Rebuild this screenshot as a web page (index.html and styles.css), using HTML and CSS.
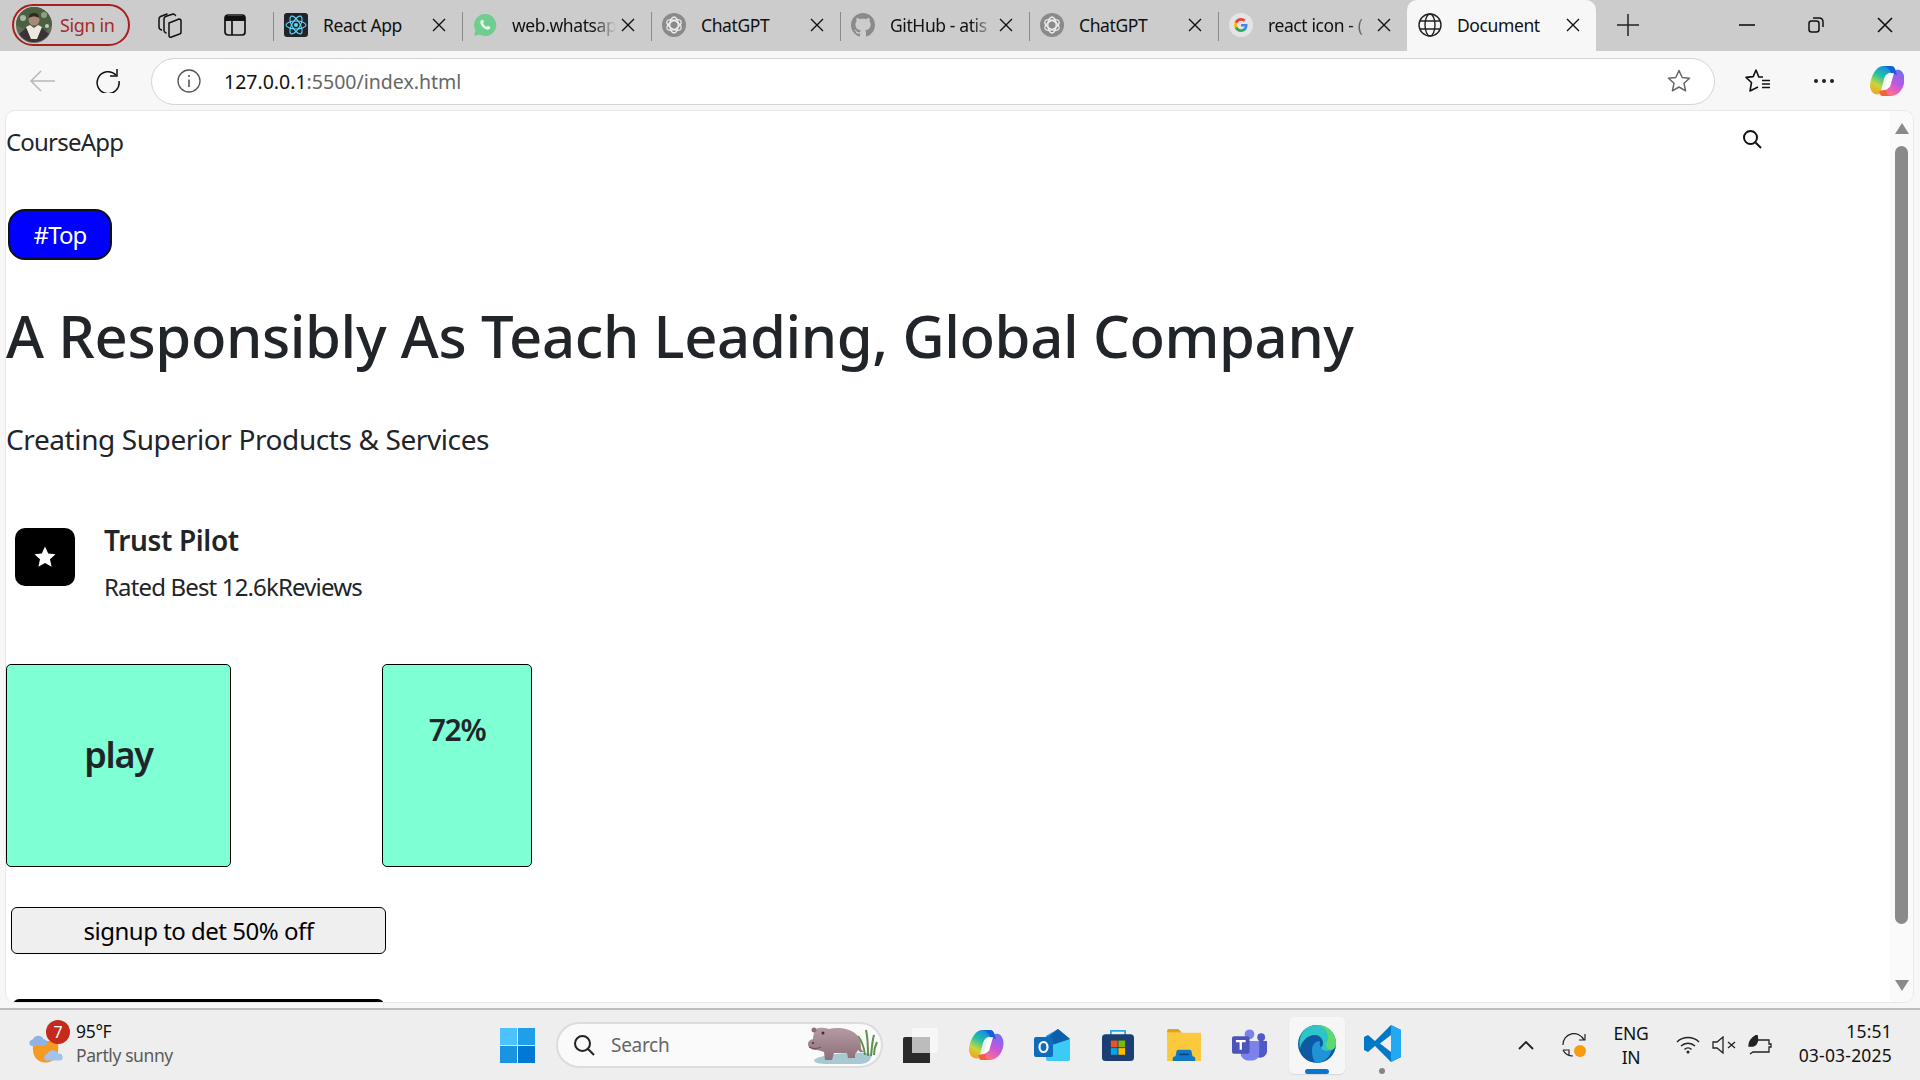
FILE: index.html
```html
<!DOCTYPE html>
<html lang="en">
<head>
    <meta charset="UTF-8">
    <meta name="viewport" content="width=device-width, initial-scale=1.0">
    <title>Document</title>
    <link rel="stylesheet" href="styles.css">
</head>
<body>
    <svg class="defs" width="0" height="0">
        <defs>
            <symbol id="close" viewBox="0 0 14 14"><path d="M1 1l12 12M13 1L1 13" fill="none" stroke="#111" stroke-width="1.4"/></symbol>
            <symbol id="gpt" viewBox="0 0 24 24">
                <circle cx="12" cy="12" r="12" fill="#8a8a8a"/>
                <g fill="none" stroke="#eee" stroke-width="1.3">
                    <ellipse cx="12" cy="12" rx="4.2" ry="8"/>
                    <ellipse cx="12" cy="12" rx="4.2" ry="8" transform="rotate(60 12 12)"/>
                    <ellipse cx="12" cy="12" rx="4.2" ry="8" transform="rotate(120 12 12)"/>
                </g>
            </symbol>
            <linearGradient id="copA" x1="0.7" y1="0" x2="0.2" y2="1">
                <stop offset="0" stop-color="#1b7fe8"/><stop offset=".4" stop-color="#22c3a6"/><stop offset=".7" stop-color="#c9d63a"/><stop offset="1" stop-color="#f9a11b"/>
            </linearGradient>
            <linearGradient id="copB" x1="0.8" y1="0" x2="0.2" y2="1">
                <stop offset="0" stop-color="#6f6ef0"/><stop offset=".45" stop-color="#c257e0"/><stop offset=".8" stop-color="#f9699a"/><stop offset="1" stop-color="#fb8a4a"/>
            </linearGradient>
            <linearGradient id="hippoBody" x1="0" y1="0" x2="0" y2="1">
                <stop offset="0" stop-color="#b59aa4"/><stop offset="1" stop-color="#8d6f78"/>
            </linearGradient>
            <symbol id="copilot" viewBox="0 0 34 32">
                <path d="M13 1h8c2 0 3 1 4 3l1 3-7 1c-3 1-4 3-5 6l-3 12c-1 3-3 4-6 3-3-1-5-5-5-9C1 11 6 1 13 1z" fill="url(#copA)"/>
                <path d="M21 31h-8c-2 0-3-1-4-3l-.5-2 7-1c3-1 4-3 5-6l3-11c1-3 3-4 6-3 3 1 5 5 5 9 0 9-6 17-14 17z" fill="url(#copB)"/>
                <path d="M14 1h7c2 0 3 1 4 3l2 6-6-2c-1-3-3-6-7-7z" fill="#1560d4"/>
                <path d="M19 9l5-1-4 14-5 2z" fill="#fff" fill-opacity=".92"/>
                <path d="M10 26l7-1c-1 3 0 5 4 6h-8c-2 0-3-2-3-5z" fill="#f4603c"/>
            </symbol>
        </defs>
    </svg>

    <div class="tabstrip">
        <div class="signin">
            <svg class="avatar" viewBox="0 0 36 36">
                <circle cx="18" cy="18" r="18" fill="#5f6d55"/>
                <path d="M0 18A18 18 0 0 1 36 18L30 24 8 22z" fill="#4a6040"/>
                <circle cx="7" cy="11" r="3" fill="#a9b7a0"/><circle cx="28" cy="8" r="3" fill="#8f9f85"/><circle cx="31" cy="19" r="2" fill="#c3cabb"/>
                <path d="M3 27a18 18 0 0 0 30 0l-7-6H10z" fill="#3d3138"/>
                <circle cx="18" cy="13" r="5.500" fill="#a98a78"/>
                <path d="M13 11c0-4 2-5 5-5s5 1 5 5c-3-2-7-2-10 0z" fill="#2f2a28"/>
                <path d="M10 20l4-2 4 3 4-3 4 2-5 12h-6z" fill="#ece8de"/>
            </svg>
            <span>Sign in</span>
        </div>
        <svg class="strip-icon first" viewBox="0 0 26 26" fill="none" stroke="#111" stroke-width="1.5" stroke-linecap="round">
            <path d="M12 11l10-4c1 0 2 0 2 2v11c0 1-.5 2-1.500 2l-8 3c-1.500.5-2.500 0-2.500-1.500z"/>
            <path d="M9 21c-1-.5-2-1-2-2.500V7c0-1 .5-2 1.500-2.500L16 2c1 0 2 .5 2.500 1.500"/>
            <path d="M4.500 18C3 17.500 2 17 2 15V7c0-1 .5-2 1.500-2.500L10 2"/>
        </svg>
        <svg class="strip-icon" viewBox="0 0 24 24" fill="none" stroke="#111" stroke-width="1.7">
            <rect x="2" y="2" width="20" height="20" rx="3"/>
            <path d="M2 5.500h20" stroke-width="5"/><path d="M9 7v15"/>
        </svg>

        <div class="tab">
            <svg class="fav" viewBox="0 0 24 24">
                <rect width="24" height="24" rx="3" fill="#20232a"/>
                <g fill="none" stroke="#61dafb" stroke-width="1.1">
                    <ellipse cx="12" cy="12" rx="10" ry="4"/>
                    <ellipse cx="12" cy="12" rx="10" ry="4" transform="rotate(60 12 12)"/>
                    <ellipse cx="12" cy="12" rx="10" ry="4" transform="rotate(120 12 12)"/>
                </g>
                <circle cx="12" cy="12" r="2" fill="#61dafb"/>
            </svg>
            <span class="tab-title">React App</span>
            <svg class="tab-x"><use href="#close"/></svg>
        </div>
        <div class="tab">
            <svg class="fav" viewBox="0 0 24 24">
                <path d="M12 1a11 11 0 0 0-9.500 16.500L1 23l5.700-1.500A11 11 0 1 0 12 1z" fill="#6fce8f"/>
                <path d="M8.500 7c-1 .6-1.500 2-1 3.500 1 2.800 3.200 5 6 6 1.500.5 2.900 0 3.500-1l.3-1.500-2.600-1.300-1.100 1.200c-1.500-.6-3-2.100-3.600-3.600l1-1.100L10 6.800z" fill="#eaf7ee"/>
            </svg>
            <span class="tab-title fade">web.whatsap</span>
            <svg class="tab-x"><use href="#close"/></svg>
        </div>
        <div class="tab">
            <svg class="fav"><use href="#gpt"/></svg>
            <span class="tab-title">ChatGPT</span>
            <svg class="tab-x"><use href="#close"/></svg>
        </div>
        <div class="tab">
            <svg class="fav" viewBox="0 0 16 16"><path fill="#8a8a8a" d="M8 0C3.580 0 0 3.580 0 8c0 3.540 2.290 6.530 5.470 7.590.4.070.55-.17.55-.38 0-.19-.01-.82-.01-1.490-2.010.37-2.530-.49-2.690-.94-.09-.23-.48-.94-.82-1.130-.28-.15-.68-.52-.01-.53.63-.01 1.080.58 1.230.82.72 1.210 1.870.87 2.330.66.070-.52.28-.87.51-1.070-1.780-.2-3.640-.89-3.640-3.950 0-.87.31-1.590.82-2.150-.08-.2-.36-1.020.08-2.120 0 0 .67-.21 2.200.82.64-.18 1.320-.27 2-.27.68 0 1.360.09 2 .27 1.530-1.040 2.200-.82 2.200-.82.44 1.100.16 1.920.08 2.120.51.56.82 1.270.82 2.150 0 3.070-1.870 3.750-3.650 3.950.29.25.54.73.54 1.480 0 1.070-.01 1.930-.01 2.200 0 .21.15.46.55.38A8.013 8.013 0 0 0 16 8c0-4.420-3.580-8-8-8z"/></svg>
            <span class="tab-title fade">GitHub - atis</span>
            <svg class="tab-x"><use href="#close"/></svg>
        </div>
        <div class="tab">
            <svg class="fav"><use href="#gpt"/></svg>
            <span class="tab-title">ChatGPT</span>
            <svg class="tab-x"><use href="#close"/></svg>
        </div>
        <div class="tab">
            <svg class="fav" viewBox="0 0 24 24">
                <circle cx="12" cy="12" r="12" fill="#e4e4e4"/>
                <path d="M18.500 12.200c0-.5 0-.9-.1-1.300H12v2.500h3.700c-.2.900-.7 1.600-1.400 2.100v1.700h2.200c1.300-1.200 2-3 2-5z" fill="#4285f4"/>
                <path d="M12 19c1.900 0 3.400-.6 4.500-1.700l-2.200-1.700c-.6.400-1.400.7-2.300.7-1.800 0-3.300-1.200-3.800-2.800H5.900v1.800C7 17.500 9.300 19 12 19z" fill="#34a853"/>
                <path d="M8.200 13.500c-.3-.9-.3-1.900 0-2.900V8.800H5.900c-1 1.900-1 4.500 0 6.500z" fill="#fbbc05"/>
                <path d="M12 7.800c1 0 1.900.3 2.600 1l2-2C15.400 5.700 13.800 5 12 5 9.300 5 7 6.500 5.900 8.800l2.300 1.800C8.700 9 10.200 7.800 12 7.800z" fill="#ea4335"/>
            </svg>
            <span class="tab-title fade">react icon - (</span>
            <svg class="tab-x"><use href="#close"/></svg>
        </div>
        <div class="tab active">
            <svg class="fav" viewBox="0 0 24 24" fill="none" stroke="#222" stroke-width="1.400">
                <circle cx="12" cy="12" r="11"/><ellipse cx="12" cy="12" rx="5" ry="11"/>
                <path d="M2 8h20M2 16h20"/>
            </svg>
            <span class="tab-title">Document</span>
            <svg class="tab-x"><use href="#close"/></svg>
        </div>
        <svg class="new-tab" viewBox="0 0 22 22"><path d="M11 0v22M0 11h22" stroke="#222" stroke-width="1.500"/></svg>

        <div class="window-btns">
            <svg viewBox="0 0 16 16"><path d="M0 8h16" stroke="#111" stroke-width="1.600"/></svg>
            <svg viewBox="0 0 16 16" fill="none" stroke="#111" stroke-width="1.500"><rect x="1" y="4" width="10" height="11" rx="2.500"/><path d="M5 1h6c2.500 0 4 1.500 4 4v5"/></svg>
            <svg viewBox="0 0 16 16"><path d="M1 1l14 14M15 1L1 15" stroke="#111" stroke-width="1.600"/></svg>
        </div>
    </div>

    <div class="toolbar">
        <svg class="tool back" viewBox="0 0 26 24" fill="none" stroke="#b8b8b8" stroke-width="1.500"><path d="M26 12H2M12 2L2 12l10 10"/></svg>
        <svg class="tool reload" viewBox="0 0 24 24" fill="none" stroke="#111" stroke-width="1.500"><path d="M20 6a11 11 0 1 0 3 6"/><path d="M21 0v7h-7"/></svg>
        <div class="addressbar">
            <svg class="info" viewBox="0 0 24 24" fill="none" stroke="#555" stroke-width="1.300"><circle cx="12" cy="12" r="11"/><path d="M12 10.500V18M12 6v2" stroke-width="1.600"/></svg>
            <span class="url">127.0.0.1<span class="url-rest">:5500/index.html</span></span>
            <svg class="addr-star" viewBox="0 0 24 24" fill="none" stroke="#666" stroke-width="1.500" stroke-linejoin="round"><path d="M12 1.500l3.200 7 7.300.8-5.500 5 1.600 7.500L12 18l-6.600 3.800L7 14.300l-5.500-5 7.300-.8z"/></svg>
        </div>
        <svg class="tool fav-list" viewBox="0 0 26 26" fill="none" stroke="#111" stroke-width="1.600" stroke-linejoin="round"><path d="M18 9h-4.200L11 2 8.200 8.600 1 9.400l5.500 5.100L5 23l8-4"/><path d="M17 12.500h8M17 16h8M17 19.500h8"/></svg>
        <svg class="tool dots" viewBox="0 0 22 6" fill="#222"><circle cx="3" cy="3" r="2"/><circle cx="11" cy="3" r="2"/><circle cx="19" cy="3" r="2"/></svg>
        <svg class="tool copilot-top"><use href="#copilot"/></svg>
    </div>

    <div class="viewport">
        <main class="page">
            <nav class="navbar">
                <span class="brand">CourseApp</span>
                <svg class="nav-search" viewBox="0 0 20 20" fill="none" stroke="#111" stroke-width="2"><circle cx="8.500" cy="8.500" r="6.500"/><path d="M13.500 13.500L19 19"/></svg>
            </nav>
            <button class="top-btn">#Top</button>
            <h1 class="headline">A Responsibly As Teach Leading, Global Company</h1>
            <p class="subhead">Creating Superior Products &amp; Services</p>
            <div class="trust">
                <div class="trust-icon">
                    <svg viewBox="0 0 24 24" fill="#fff"><path d="M12 1.500l3.200 7 7.300.8-5.500 5 1.600 7.500L12 18l-6.600 3.800L7 14.300l-5.500-5 7.300-.8z"/></svg>
                </div>
                <div>
                    <h4 class="trust-title">Trust Pilot</h4>
                    <p class="trust-text">Rated Best 12.6kReviews</p>
                </div>
            </div>
            <div class="cards">
                <div class="card card-play">play</div>
                <div class="card card-percent">72%</div>
            </div>
            <button class="signup">signup to det 50% off</button>
            <div class="dark-btn"></div>
        </main>
        <div class="scrollbar">
            <span class="arrow-up"></span>
            <span class="thumb"></span>
            <span class="arrow-down"></span>
        </div>
    </div>

    <footer class="taskbar">
        <div class="weather">
            <div class="weather-icon">
                <svg viewBox="0 0 38 36">
                    <path d="M4 14h26v8c0 8-5 14-13 14S4 30 4 22z" fill="#f59a23"/>
                    <path d="M1 18a4 4 0 0 1 3-6 6 6 0 0 1 11 0 3.500 3.500 0 0 1 0 7H3z" fill="#8fb3e8"/>
                    <path d="M16 33a4 4 0 0 1 3-6 6 6 0 0 1 11 0 3.500 3.500 0 0 1 2 7H18z" fill="#a5c2ee"/>
                </svg>
                <span class="weather-badge">7</span>
            </div>
            <div class="weather-text">
                <span>95°F</span>
                <span class="muted">Partly sunny</span>
            </div>
        </div>
        <div class="task-center">
            <svg class="win-logo" viewBox="0 0 35 35">
                <rect width="17" height="17" fill="#4cc2ff"/><rect x="18" width="17" height="17" fill="#1e9fe8"/>
                <rect y="18" width="17" height="17" fill="#1a94e0"/><rect x="18" y="18" width="17" height="17" fill="#0078d4"/>
            </svg>
            <div class="searchbox">
                <svg viewBox="0 0 22 22" fill="none" stroke="#222" stroke-width="2"><circle cx="9.500" cy="9.500" r="7.500"/><path d="M15 15l6 6"/></svg>
                <span>Search</span>
                <svg class="hippo" viewBox="0 0 72 40">
                    <path d="M8 35c6-7 50-9 58-6-1 8-6 10-14 10H22C14 39 8 38 8 35z" fill="#a8c8d2"/>
                    <path d="M59 30c-1-9-4-15-7-19M62 31c0-10 0-18-2-26M65 31c1-8 1-14 3-21M68 30c0-5 1-9 3-13" stroke="#5f8f4f" stroke-width="2" fill="none"/>
                    <path d="M10 4c4-2 9-1 13 0 8-2 20-1 27 5 4 4 5 9 5 14 0 2 2 3 3 4l-4 0-2-2c-1 2-2 3-3 4v4h-7l-1-5H28l-2 7h-7l-1-8c-3-1-5-2-7-2-5 0-9-2-9-6 0-3 2-4 5-5 0-3 1-7 3-10z" fill="url(#hippoBody)"/>
                    <circle cx="8" cy="5" r="2.500" fill="#8d6f78"/>
                    <circle cx="17" cy="8" r="1.500" fill="#333"/>
                    <ellipse cx="7" cy="18" rx="1.200" ry="1" fill="#4d3a40"/>
                    <path d="M3 22c4 2 8 2 12 0" stroke="#6d5059" fill="none"/>
                </svg>
            </div>
            <svg class="app task-view" viewBox="0 0 35 35">
                <path d="M0 11a2 2 0 0 1 2-2h23a2 2 0 0 1 2 2v24H0z" fill="#2a2a2a"/>
                <rect x="9" width="26" height="25" rx="1" fill="#f7f7f7" fill-opacity=".9"/>
                <rect x="9" y="9" width="18" height="16" fill="#bcbcbc"/>
            </svg>
            <svg class="app"><use href="#copilot"/></svg>
            <svg class="app" viewBox="0 0 36 32">
                <path d="M12 7L24 0l12 10v19a3 3 0 0 1-3 3H15a3 3 0 0 1-3-3z" fill="#1490df"/>
                <path d="M24 0l12 10-12 8-12-8z" fill="#0c5ea8"/>
                <path d="M12 18l24-8v19a3 3 0 0 1-3 3H15a3 3 0 0 1-3-3z" fill="#3ccbf4"/>
                <rect y="8" width="19" height="20" rx="2" fill="#0f6cbd"/>
                <ellipse cx="9.500" cy="18" rx="4" ry="5" fill="none" stroke="#fff" stroke-width="2.200"/>
            </svg>
            <svg class="app" viewBox="0 0 36 36">
                <path d="M10 8V2h16v6" fill="none" stroke="#2aa7e8" stroke-width="2"/>
                <rect y="6" width="36" height="30" rx="4" fill="#1b3f72"/>
                <rect x="10" y="13" width="7.500" height="7.500" fill="#f25022"/><rect x="18.500" y="13" width="7.500" height="7.500" fill="#7fba00"/>
                <rect x="10" y="21.500" width="7.500" height="7.500" fill="#00a4ef"/><rect x="18.500" y="21.500" width="7.500" height="7.500" fill="#ffb900"/>
            </svg>
            <svg class="app" viewBox="0 0 36 34">
                <path d="M0 2a2 2 0 0 1 2-2h10l4 4h-16z" fill="#e3a40f"/>
                <rect y="4" width="36" height="30" fill="#fcc93c"/>
                <path d="M6 32a3 3 0 0 1 3-3l1-5a2 2 0 0 1 2-2h12a2 2 0 0 1 2 2l1 5a3 3 0 0 1 3 3v2H6z" fill="#0f78c9"/>
                <path d="M13 27h10" stroke="#0a3e70" stroke-width="1.500"/>
            </svg>
            <svg class="app" viewBox="0 0 37 32">
                <circle cx="18" cy="5" r="5" fill="#7b83eb"/><circle cx="30" cy="8" r="4" fill="#5059c9"/>
                <path d="M24 12h12v10c0 4-3 7-7 7-2 0-4-1-5-2z" fill="#5059c9"/>
                <path d="M9 12h19v13a7 7 0 0 1-7 7h-4c-4 0-8-3-8-7z" fill="#7b83eb"/>
                <rect y="7" width="18" height="18" rx="2" fill="#4b53bc"/>
                <path d="M4 12h10M9 12v9" stroke="#fff" stroke-width="2.400"/>
            </svg>
            <div class="edge-slot">
                <svg viewBox="0 0 38 38">
                    <circle cx="19" cy="19" r="19" fill="#0c59a4"/>
                    <path d="M2 24C-1 9 8 0 19 0c11 0 19 8 19 18 0 5-4 8-9 8-4 0-7-1-7-3 2-1 3-3 3-5 0-5-4-8-8-8-8 0-14 7-15 14z" fill="#2fc4c8"/>
                    <path d="M38 18C38 8 30 0 19 0c7 2 11 6 11 12 0 3-1 5-2 6 0 5 3 8 6 7 3-2 4-4 4-7z" fill="#5dd96d"/>
                    <path d="M14 25c0-5 3-9 8-9-1 5 1 9 6 10 2 0 4 0 6-1-3 8-9 13-15 13-3 0-5-6-5-13z" fill="#2292d6"/>
                </svg>
                <span class="edge-line"></span>
            </div>
            <div class="code-slot">
                <svg viewBox="0 0 37 37">
                    <path d="M27 0l10 5v27l-10 5L11 21 4 27l-4-2v-13l4-2 7 6z" fill="#0078c8"/>
                    <path d="M27 10L16 18.500 27 27z" fill="#f0f0f0"/>
                    <path d="M27 0l10 5v27l-10 5z" fill="#23a9f2"/>
                </svg>
                <span class="code-dot"></span>
            </div>
        </div>
        <div class="tray">
            <svg class="tray-chevron" viewBox="0 0 16 9" fill="none" stroke="#222" stroke-width="1.800"><path d="M1 8l7-7 7 7"/></svg>
            <svg class="tray-sync" viewBox="0 0 24 24" fill="none" stroke="#222" stroke-width="1.200">
                <path d="M1 12A11 11 0 0 1 22 7M23 1v6h-6M1 17h6v6M1 17a11 11 0 0 0 10 6"/>
                <circle cx="18" cy="18" r="6" fill="#f99b0c" stroke="none"/>
            </svg>
            <div class="tray-lang"><span>ENG</span><span>IN</span></div>
            <svg class="tray-wifi" viewBox="0 0 24 18" fill="none" stroke="#222" stroke-width="1.500"><path d="M1 6a16 16 0 0 1 22 0M5 10a10 10 0 0 1 14 0M8.500 13.500a5 5 0 0 1 7 0"/><circle cx="12" cy="16" r="1.500" fill="#222" stroke="none"/></svg>
            <svg class="tray-sound" viewBox="0 0 24 18" fill="none" stroke="#222" stroke-width="1.300"><path d="M1 6h4l6-5v16l-6-5H1zM16 6l7 6M23 6l-7 6"/></svg>
            <svg class="tray-battery" viewBox="0 0 24 20" fill="none" stroke="#222" stroke-width="1.300"><path d="M9 5h12v4h2v3h-2v5H5l-3 2"/><path d="M1 11C1 5 5 2 9 0c1 4 1 10-4 11z" fill="#222"/></svg>
            <div class="clock"><span>15:51</span><span>03-03-2025</span></div>
        </div>
    </footer>
</body>
</html>
```

FILE: styles.css
```css
:root {
    --strip-bg: #cccccc;
    --toolbar-bg: #f7f7f7;
    --task-bg: #eeeeee;
    --text-dark: #212529;
    --card-bg: #7fffd4;
}

* {
    box-sizing: border-box;
}

html, body {
    height: 100%;
}

body {
    margin: 0;
    display: flex;
    flex-direction: column;
    overflow: hidden;
    font-family: "Noto Sans", "Open Sans", sans-serif;
    background: var(--toolbar-bg);
    color: #111;
}

svg {
    display: block;
    flex: none;
}

.defs {
    position: absolute;
}

/* browser tabs */
.tabstrip {
    height: 51px;
    flex: none;
    display: flex;
    align-items: center;
    background: var(--strip-bg);
    padding-left: 12px;
}

.signin {
    width: 118px;
    height: 42px;
    margin-top: -1px;
    display: flex;
    align-items: center;
    gap: 8px;
    padding-left: 2px;
    border: 2px solid #a91e1e;
    border-radius: 21px;
    color: #a52a2a;
    font-size: 18px;
    letter-spacing: -0.4px;
}

.avatar {
    width: 36px;
    height: 36px;
}

.strip-icon {
    width: 24px;
    height: 24px;
    margin-left: 40px;
    margin-top: -1px;
}

.strip-icon.first {
    width: 26px;
    height: 26px;
    margin-left: 27px;
}

.strip-icon + .tab {
    margin-left: 26px;
}

.tab {
    position: relative;
    width: 189px;
    height: 51px;
    flex: none;
    display: flex;
    align-items: center;
    padding: 0 16px 2px 11px;
    font-size: 17.5px;
    letter-spacing: -0.4px;
}

.tab::before {
    content: "";
    position: absolute;
    left: 0;
    top: 12px;
    height: 29px;
    width: 1px;
    background: #8a8a8a;
}

.tab.active {
    background: var(--toolbar-bg);
    border-radius: 10px 10px 0 0;
}

.tab.active::before {
    display: none;
}

.fav {
    width: 24px;
    height: 24px;
}

.tab-title {
    flex: 1;
    margin: 0 5px 0 15px;
    white-space: nowrap;
    overflow: hidden;
}

.tab-title.fade {
    -webkit-mask-image: linear-gradient(to right, #000 78%, transparent 100%);
    mask-image: linear-gradient(to right, #000 78%, transparent 100%);
}

.tab-x {
    width: 14px;
    height: 14px;
}

.new-tab {
    width: 22px;
    height: 22px;
    margin-left: 21px;
    margin-top: -1px;
}

.window-btns {
    display: flex;
    margin-left: auto;
    margin-top: -1px;
    margin-right: 27px;
    gap: 53px;
}

.window-btns svg {
    width: 16px;
    height: 16px;
}

/* address bar row */
.toolbar {
    height: 59px;
    flex: none;
    display: flex;
    align-items: center;
    padding: 0 16px 0 29px;
}

.tool.back {
    width: 26px;
    height: 24px;
}

.tool.reload {
    width: 24px;
    height: 24px;
    margin-left: 41px;
}

.addressbar {
    width: 1565px;
    height: 47px;
    margin-left: 31px;
    margin-top: 1px;
    display: flex;
    align-items: center;
    padding: 0 23px 0 25px;
    background: #fff;
    border: 1.5px solid #d4d4d4;
    border-radius: 24px;
}

.info {
    width: 24px;
    height: 24px;
}

.url {
    margin-left: 23px;
    font-size: 19.5px;
    color: #111;
}

.url-rest {
    color: #666;
}

.addr-star {
    width: 24px;
    height: 24px;
    margin-left: auto;
}

.tool.fav-list {
    width: 26px;
    height: 26px;
    margin-left: 30px;
}

.tool.dots {
    width: 22px;
    height: 6px;
    margin-left: 42px;
}

.tool.copilot-top {
    width: 34px;
    height: 32px;
    margin-left: 35px;
}

/* page area */
.viewport {
    height: 893px;
    flex: none;
    display: flex;
    margin: 0 6px 0 5px;
    background: #fff;
    border: 1px solid #e8e8e8;
    border-radius: 10px;
    overflow: hidden;
}

.page {
    flex: 1;
    min-width: 0;
    overflow: hidden;
    color: var(--text-dark);
}

.navbar {
    height: 52px;
    padding-top: 8px;
    display: flex;
    align-items: center;
    justify-content: space-between;
    padding-right: 128px;
}

.brand {
    font-size: 24px;
    letter-spacing: -0.8px;
}

.nav-search {
    width: 20px;
    height: 20px;
    margin-top: -4px;
}

.top-btn {
    display: block;
    width: 104px;
    height: 51px;
    margin: 46px 0 0 2px;
    padding: 0;
    background: #0000ff;
    color: #fff;
    border: 2.5px solid #111;
    border-radius: 17px;
    font-family: inherit;
    font-size: 24px;
    letter-spacing: -0.9px;
}

.headline {
    margin: 41px 0 0;
    font-size: 58px;
    font-weight: 500;
    line-height: 1.2;
    letter-spacing: -0.38px;
    white-space: nowrap;
}

.subhead {
    margin: 52px 0 0;
    font-size: 28px;
    line-height: 1.2;
    letter-spacing: -0.4px;
}

.trust {
    display: flex;
    margin: 72px 0 0 9px;
    gap: 29px;
}

.trust-icon {
    width: 60px;
    height: 58px;
    display: flex;
    align-items: center;
    justify-content: center;
    background: #000;
    border-radius: 10px;
}

.trust-icon svg {
    width: 24px;
    height: 24px;
}

.trust-title {
    margin: -4px 0 0;
    font-size: 28px;
    font-weight: 600;
    line-height: 1.2;
    letter-spacing: -0.35px;
}

.trust-text {
    margin: 15px 0 0;
    font-size: 24px;
    line-height: 1.2;
    letter-spacing: -0.85px;
}

.cards {
    display: flex;
    margin: 62px 0 0;
    gap: 151px;
}

.card {
    height: 203px;
    padding-top: 68px;
    background: var(--card-bg);
    border: 1px solid #000;
    border-radius: 5px;
    text-align: center;
    font-weight: 600;
}

.card-play {
    width: 225px;
    font-size: 36px;
    line-height: 1.2;
    letter-spacing: -1.2px;
}

.card-percent {
    width: 150px;
    padding-top: 47px;
    font-size: 30px;
    line-height: 1.2;
    letter-spacing: -1.3px;
}

.signup {
    display: block;
    width: 375px;
    height: 47px;
    margin: 40px 0 0 5px;
    padding: 0;
    background: #efefef;
    border: 1px solid #000;
    border-radius: 6px;
    font-family: inherit;
    font-size: 24px;
    letter-spacing: -0.5px;
    color: #000;
}

.dark-btn {
    width: 371px;
    height: 8px;
    margin: 45px 0 0 7px;
    background: #000;
    border-radius: 6px 6px 0 0;
}

.scrollbar {
    width: 23px;
    flex: none;
    display: flex;
    flex-direction: column;
    align-items: center;
    padding-top: 12px;
    background: #fafafa;
}

.arrow-up {
    width: 0;
    height: 0;
    border-left: 7px solid transparent;
    border-right: 7px solid transparent;
    border-bottom: 11px solid #8a8a8a;
}

.thumb {
    width: 13px;
    height: 778px;
    margin-top: 12px;
    background: #8a8a8a;
    border-radius: 7px;
}

.arrow-down {
    width: 0;
    height: 0;
    margin-top: 56px;
    border-left: 7px solid transparent;
    border-right: 7px solid transparent;
    border-top: 11px solid #8a8a8a;
}

/* windows taskbar */
.taskbar {
    height: 72px;
    margin-top: 5px;
    flex: none;
    display: flex;
    align-items: center;
    background: var(--task-bg);
    border-top: 2px solid #bdbdbd;
    font-size: 17.5px;
    letter-spacing: -0.3px;
}

.weather {
    width: 500px;
    flex: none;
    display: flex;
    align-items: center;
    gap: 10px;
    padding-left: 29px;
}

.weather-icon {
    position: relative;
    width: 37px;
    height: 36px;
}

.weather-icon svg {
    width: 37px;
    height: 36px;
}

.weather-badge {
    position: absolute;
    left: 17px;
    top: -7px;
    width: 24px;
    height: 24px;
    border-radius: 50%;
    background: #c42b1c;
    color: #fff;
    font-size: 16px;
    line-height: 24px;
    text-align: center;
}

.weather-text {
    display: flex;
    flex-direction: column;
    margin-top: -4px;
    line-height: 24px;
}

.muted {
    color: #5a5a5a;
    letter-spacing: -0.4px;
}

.task-center {
    display: flex;
    align-items: center;
}

.win-logo {
    width: 35px;
    height: 35px;
}

.searchbox {
    width: 327px;
    height: 46px;
    margin-left: 21px;
    display: flex;
    align-items: center;
    padding: 0 3px 0 15px;
    background: #fafafa;
    border: 2px solid #dcdcdc;
    border-radius: 23px;
    color: #666;
    font-size: 19px;
}

.searchbox svg {
    width: 22px;
    height: 22px;
}

.searchbox span {
    margin-left: 16px;
}

.searchbox .hippo {
    width: 72px;
    height: 40px;
    margin-left: auto;
}

.app {
    width: 36px;
    height: 32px;
    margin-left: 30px;
}

.app.task-view {
    width: 35px;
    height: 35px;
    margin-left: 20px;
}

.app + .edge-slot {
    margin-left: 21px;
}

.edge-slot {
    position: relative;
    width: 56px;
    height: 57px;
    display: flex;
    align-items: center;
    justify-content: center;
    background: #f6f6f6;
    border-radius: 5px;
    box-shadow: 0 1px 1px #d8d8d8;
}

.edge-slot svg {
    width: 38px;
    height: 38px;
    margin-top: -3px;
}

.edge-line {
    position: absolute;
    left: 16px;
    bottom: 0;
    width: 24px;
    height: 5px;
    border-radius: 3px;
    background: #0a74cf;
}

.code-slot {
    position: relative;
    margin-left: 19px;
}

.code-slot svg {
    width: 37px;
    height: 37px;
    margin-top: -3px;
}

.code-dot {
    position: absolute;
    left: 15px;
    bottom: -12px;
    width: 6px;
    height: 6px;
    border-radius: 50%;
    background: #858585;
}

.tray {
    display: flex;
    align-items: center;
    margin-left: auto;
    padding-right: 28px;
}

.tray-chevron {
    width: 16px;
    height: 9px;
}

.tray-sync {
    width: 24px;
    height: 24px;
    margin-left: 28px;
}

.tray-lang {
    width: 60px;
    margin-left: 15px;
    display: flex;
    flex-direction: column;
    align-items: center;
    line-height: 24px;
}

.tray-wifi {
    width: 24px;
    height: 18px;
    margin-left: 15px;
}

.tray-sound {
    width: 24px;
    height: 18px;
    margin-left: 12px;
}

.tray-battery {
    width: 24px;
    height: 20px;
    margin-left: 12px;
}

.clock {
    width: 120px;
    margin-top: -4px;
    display: flex;
    flex-direction: column;
    align-items: flex-end;
    line-height: 24px;
    letter-spacing: 0.2px;
}
```
